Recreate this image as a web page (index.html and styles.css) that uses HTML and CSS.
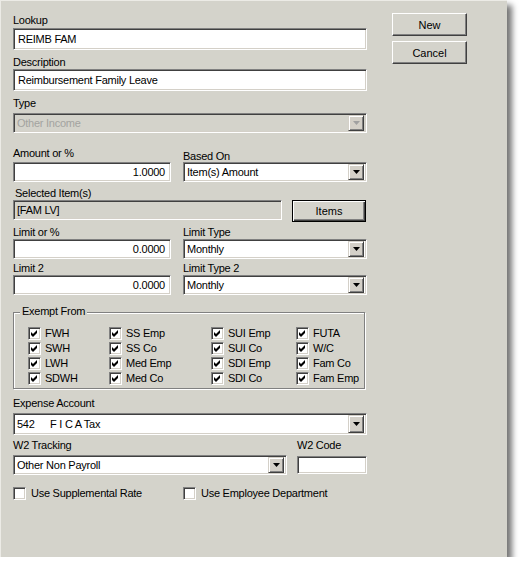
FILE: index.html
```html
<!DOCTYPE html>
<html>
<head>
<meta charset="utf-8">
<link rel="stylesheet" href="styles.css">
</head>
<body>
<div class="window">
  <div class="form">
    <div class="lbl mb1">Lookup</div>
    <div class="field tall">REIMB FAM</div>

    <div class="lbl mt6">Description</div>
    <div class="field tall">Reimbursement Family Leave</div>

    <div class="lbl mt6 mb3">Type</div>
    <div class="field select disabled">
      <span class="val">Other Income</span>
      <span class="arrow"><svg width="7" height="4" viewBox="0 0 7 4"><path d="M0 0H7L3.5 4Z" fill="#a0a0a0"/></svg></span>
    </div>

    <div class="row mt14">
      <div class="col left">
        <div class="lbl mb2">Amount or %</div>
        <div class="field num">1.0000</div>
      </div>
      <div class="col right">
        <div class="lbl mt3 mbm1">Based On</div>
        <div class="field select">
          <span class="val">Item(s) Amount</span>
          <span class="arrow"><svg width="7" height="4" viewBox="0 0 7 4"><path d="M0 0H7L3.5 4Z" fill="#000"/></svg></span>
        </div>
      </div>
    </div>

    <div class="lbl mt5 ind">Selected Item(s)</div>
    <div class="row items-row">
      <div class="field grey sel">[FAM LV]</div>
      <button class="btn default">Items</button>
    </div>

    <div class="row mt4">
      <div class="col left">
        <div class="lbl">Limit or %</div>
        <div class="field num">0.0000</div>
      </div>
      <div class="col right">
        <div class="lbl">Limit Type</div>
        <div class="field select">
          <span class="val">Monthly</span>
          <span class="arrow"><svg width="7" height="4" viewBox="0 0 7 4"><path d="M0 0H7L3.5 4Z" fill="#000"/></svg></span>
        </div>
      </div>
    </div>

    <div class="row mt3">
      <div class="col left">
        <div class="lbl">Limit 2</div>
        <div class="field num">0.0000</div>
      </div>
      <div class="col right">
        <div class="lbl">Limit Type 2</div>
        <div class="field select">
          <span class="val">Monthly</span>
          <span class="arrow"><svg width="7" height="4" viewBox="0 0 7 4"><path d="M0 0H7L3.5 4Z" fill="#000"/></svg></span>
        </div>
      </div>
    </div>

    <div class="group">
      <div class="legend">Exempt From</div>
      <div class="checks">
        <div class="cbl"><span class="cb"><svg width="7" height="7" viewBox="0 0 7 7"><path d="M0 2L2 4L6 0V3L2 7L0 5Z"/></svg></span>FWH</div>
        <div class="cbl"><span class="cb"><svg width="7" height="7" viewBox="0 0 7 7"><path d="M0 2L2 4L6 0V3L2 7L0 5Z"/></svg></span>SS Emp</div>
        <div class="cbl"><span class="cb"><svg width="7" height="7" viewBox="0 0 7 7"><path d="M0 2L2 4L6 0V3L2 7L0 5Z"/></svg></span>SUI Emp</div>
        <div class="cbl"><span class="cb"><svg width="7" height="7" viewBox="0 0 7 7"><path d="M0 2L2 4L6 0V3L2 7L0 5Z"/></svg></span>FUTA</div>

        <div class="cbl"><span class="cb"><svg width="7" height="7" viewBox="0 0 7 7"><path d="M0 2L2 4L6 0V3L2 7L0 5Z"/></svg></span>SWH</div>
        <div class="cbl"><span class="cb"><svg width="7" height="7" viewBox="0 0 7 7"><path d="M0 2L2 4L6 0V3L2 7L0 5Z"/></svg></span>SS Co</div>
        <div class="cbl"><span class="cb"><svg width="7" height="7" viewBox="0 0 7 7"><path d="M0 2L2 4L6 0V3L2 7L0 5Z"/></svg></span>SUI Co</div>
        <div class="cbl"><span class="cb"><svg width="7" height="7" viewBox="0 0 7 7"><path d="M0 2L2 4L6 0V3L2 7L0 5Z"/></svg></span>W/C</div>

        <div class="cbl"><span class="cb"><svg width="7" height="7" viewBox="0 0 7 7"><path d="M0 2L2 4L6 0V3L2 7L0 5Z"/></svg></span>LWH</div>
        <div class="cbl"><span class="cb"><svg width="7" height="7" viewBox="0 0 7 7"><path d="M0 2L2 4L6 0V3L2 7L0 5Z"/></svg></span>Med Emp</div>
        <div class="cbl"><span class="cb"><svg width="7" height="7" viewBox="0 0 7 7"><path d="M0 2L2 4L6 0V3L2 7L0 5Z"/></svg></span>SDI Emp</div>
        <div class="cbl"><span class="cb"><svg width="7" height="7" viewBox="0 0 7 7"><path d="M0 2L2 4L6 0V3L2 7L0 5Z"/></svg></span>Fam Co</div>

        <div class="cbl"><span class="cb"><svg width="7" height="7" viewBox="0 0 7 7"><path d="M0 2L2 4L6 0V3L2 7L0 5Z"/></svg></span>SDWH</div>
        <div class="cbl"><span class="cb"><svg width="7" height="7" viewBox="0 0 7 7"><path d="M0 2L2 4L6 0V3L2 7L0 5Z"/></svg></span>Med Co</div>
        <div class="cbl"><span class="cb"><svg width="7" height="7" viewBox="0 0 7 7"><path d="M0 2L2 4L6 0V3L2 7L0 5Z"/></svg></span>SDI Co</div>
        <div class="cbl"><span class="cb"><svg width="7" height="7" viewBox="0 0 7 7"><path d="M0 2L2 4L6 0V3L2 7L0 5Z"/></svg></span>Fam Emp</div>
      </div>
    </div>

    <div class="lbl mt8 mb3">Expense Account</div>
    <div class="field select tall">
      <span class="val"><span class="acct">542</span>F I C A Tax</span>
      <span class="arrow"><svg width="7" height="4" viewBox="0 0 7 4"><path d="M0 0H7L3.5 4Z" fill="#000"/></svg></span>
    </div>

    <div class="row mt4">
      <div class="col w2t">
        <div class="lbl mb3">W2 Tracking</div>
        <div class="field select">
          <span class="val">Other Non Payroll</span>
          <span class="arrow"><svg width="7" height="4" viewBox="0 0 7 4"><path d="M0 0H7L3.5 4Z" fill="#000"/></svg></span>
        </div>
      </div>
      <div class="col w2c">
        <div class="lbl mb4">W2 Code</div>
        <div class="field short"></div>
      </div>
    </div>

    <div class="row bottom-checks">
      <div class="cbl wide"><span class="cb"></span>Use Supplemental Rate</div>
      <div class="cbl"><span class="cb"></span>Use Employee Department</div>
    </div>
  </div>

  <div class="side">
    <button class="btn">New</button>
    <button class="btn">Cancel</button>
  </div>
</div>
</body>
</html>
```

FILE: styles.css
```css
* { box-sizing: border-box; }
html, body { margin: 0; padding: 0; background: #fff; }
body {
  font-family: "Liberation Sans", Arial, sans-serif;
  font-size: 11px;
  letter-spacing: -0.25px;
  color: #000;
}
.window {
  width: 507px;
  height: 557px;
  background: #d4d3cb;
  border-top: 1px solid #ecebe6;
  border-left: 1px solid #ecebe6;
  box-shadow: 5px 5px 6px rgba(0,0,0,0.55);
  display: flex;
  align-items: flex-start;
  padding: 12px 0 0 12px;
}
.form { width: 354px; margin-top: 1px; }
.side {
  margin-left: 25px;
  display: flex;
  flex-direction: column;
  gap: 5px;
}
.lbl { height: 13px; line-height: 13px; white-space: nowrap; }
.mt3 { margin-top: 3px; }
.mt4 { margin-top: 4px; }
.mt5 { margin-top: 5px; }
.mt6 { margin-top: 6px; }
.mt8 { margin-top: 8px; }
.mt14 { margin-top: 14px; }
.mb1 { margin-bottom: 1px; }
.mb2 { margin-bottom: 2px; }
.mb3 { margin-bottom: 3px; }
.mb4 { margin-bottom: 4px; }
.mbm1 { margin-bottom: -1px; }
.ind { padding-left: 2px; }

.field {
  height: 20px;
  background: #fff;
  border: 1px solid;
  border-color: #808080 #fff #fff #808080;
  box-shadow: inset 1px 1px 0 #404040, inset -1px -1px 0 #d4d0c8;
  padding: 0 3px 0 4px;
  line-height: 18px;
  white-space: nowrap;
  overflow: hidden;
}
.field.tall { height: 22px; line-height: 20px; }
.field.num { text-align: right; padding-right: 5px; }
.field.grey { background: #d4d3cb; }
.field.disabled { background: #d4d3cb; color: #a3a3a0; }
.field.select {
  display: flex;
  align-items: center;
  padding: 2px 2px 2px 3px;
}
.field.select .val { flex: 1; line-height: 16px; }
.arrow {
  width: 16px;
  height: 16px;
  flex: none;
  background: #d4d0c8;
  border: 1px solid;
  border-color: #d4d0c8 #404040 #404040 #d4d0c8;
  box-shadow: inset 1px 1px 0 #fff, inset -1px -1px 0 #808080;
  display: flex;
  align-items: center;
  justify-content: center;
}
.arrow svg { display: block; }
.field.select.tall .arrow { height: 18px; }
.acct { display: inline-block; width: 33px; }

.row { display: flex; align-items: flex-start; }
.col.left { width: 158px; }
.col.right { width: 184px; margin-left: 12px; }
.items-row { gap: 10px; }
.field.sel { width: 269px; padding-left: 3px; }

.btn {
  width: 75px;
  height: 23px;
  padding: 0;
  font: inherit;
  color: #000;
  background: #d4d3cb;
  border: 1px solid;
  border-color: #fff #404040 #404040 #fff;
  box-shadow: inset -1px -1px 0 #808080;
}
.btn.default {
  height: 22px;
  width: 74px;
  border: 1px solid #000;
  box-shadow: inset 1px 1px 0 #fff, inset -1px -1px 0 #404040, inset -2px -2px 0 #808080;
}

.group {
  margin-top: 17px;
  width: 352px;
  height: 77px;
  border: 1px solid #808080;
  box-shadow: inset 1px 1px 0 #fff, 1px 1px 0 #fff;
}
.legend {
  width: fit-content;
  margin: -8px 0 0 6px;
  padding: 0 2px;
  height: 13px;
  line-height: 13px;
  background: #d4d3cb;
}
.checks {
  margin: 9px 0 0 14px;
  display: grid;
  grid-template-columns: 81px 102px 85px 60px;
  grid-auto-rows: 15px;
}
.cbl {
  display: flex;
  align-items: center;
  height: 13px;
  line-height: 13px;
  white-space: nowrap;
}
.cb {
  width: 13px;
  height: 13px;
  flex: none;
  margin-right: 4px;
  background: #fff;
  border: 1px solid;
  border-color: #808080 #fff #fff #808080;
  box-shadow: inset 1px 1px 0 #404040, inset -1px -1px 0 #d4d0c8;
  display: flex;
  align-items: center;
  justify-content: center;
}
.cb svg { display: block; }
.cb path { fill: #000; }

.col.w2t { width: 274px; }
.col.w2c { width: 70px; margin-left: 10px; }
.field.short { height: 18px; }
.bottom-checks { margin-top: 12px; }
.bottom-checks .cbl.wide { width: 170px; }
.bottom-checks .cb { margin-right: 5px; }
```
